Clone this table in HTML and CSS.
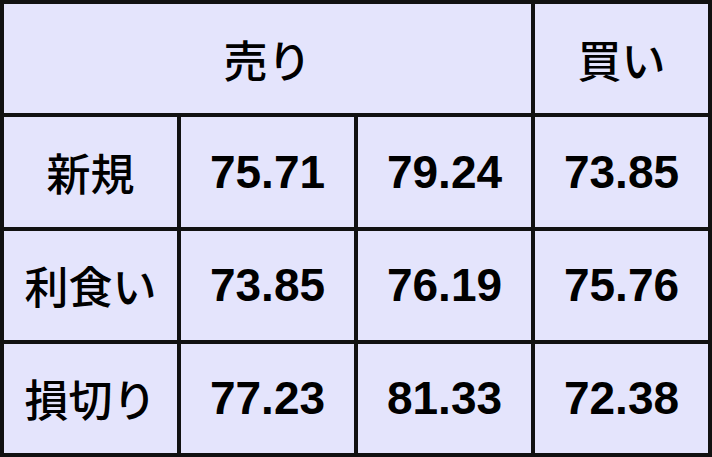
FILE: index.html
```html
<!DOCTYPE html>
<html lang="ja">
<head>
<meta charset="utf-8">
<link rel="stylesheet" href="styles.css">
</head>
<body>
<table class="grid">
  <colgroup>
    <col class="col">
    <col class="col">
    <col class="col">
    <col class="col">
  </colgroup>
  <tr class="row head">
    <td class="cell label" colspan="3">売り</td>
    <td class="cell label">買い</td>
  </tr>
  <tr class="row">
    <td class="cell label">新規</td>
    <td class="cell num">75.71</td>
    <td class="cell num">79.24</td>
    <td class="cell num">73.85</td>
  </tr>
  <tr class="row">
    <td class="cell label">利食い</td>
    <td class="cell num">73.85</td>
    <td class="cell num">76.19</td>
    <td class="cell num">75.76</td>
  </tr>
  <tr class="row last">
    <td class="cell label">損切り</td>
    <td class="cell num">77.23</td>
    <td class="cell num">81.33</td>
    <td class="cell num">72.38</td>
  </tr>
</table>
</body>
</html>
```
FILE: styles.css
```css
html, body {
  margin: 0;
  padding: 0;
  background: #e6e6fa;
}
.grid {
  border-collapse: collapse;
  width: 712px;
  height: 457px;
  table-layout: fixed;
  background: #e4e4fc;
}
.col { width: 25%; }
.cell {
  border: 4px solid #111;
  padding: 0;
  text-align: center;
  vertical-align: middle;
  color: #000;
  white-space: nowrap;
  line-height: 1;
}
.row { height: 109px; }
.label {
  font-family: "Noto Sans CJK JP", "Noto Sans", sans-serif;
  font-size: 44px;
  font-weight: 500;
}
.num {
  font-family: "Liberation Sans", Arial, sans-serif;
  font-size: 46px;
  font-weight: bold;
}
```
